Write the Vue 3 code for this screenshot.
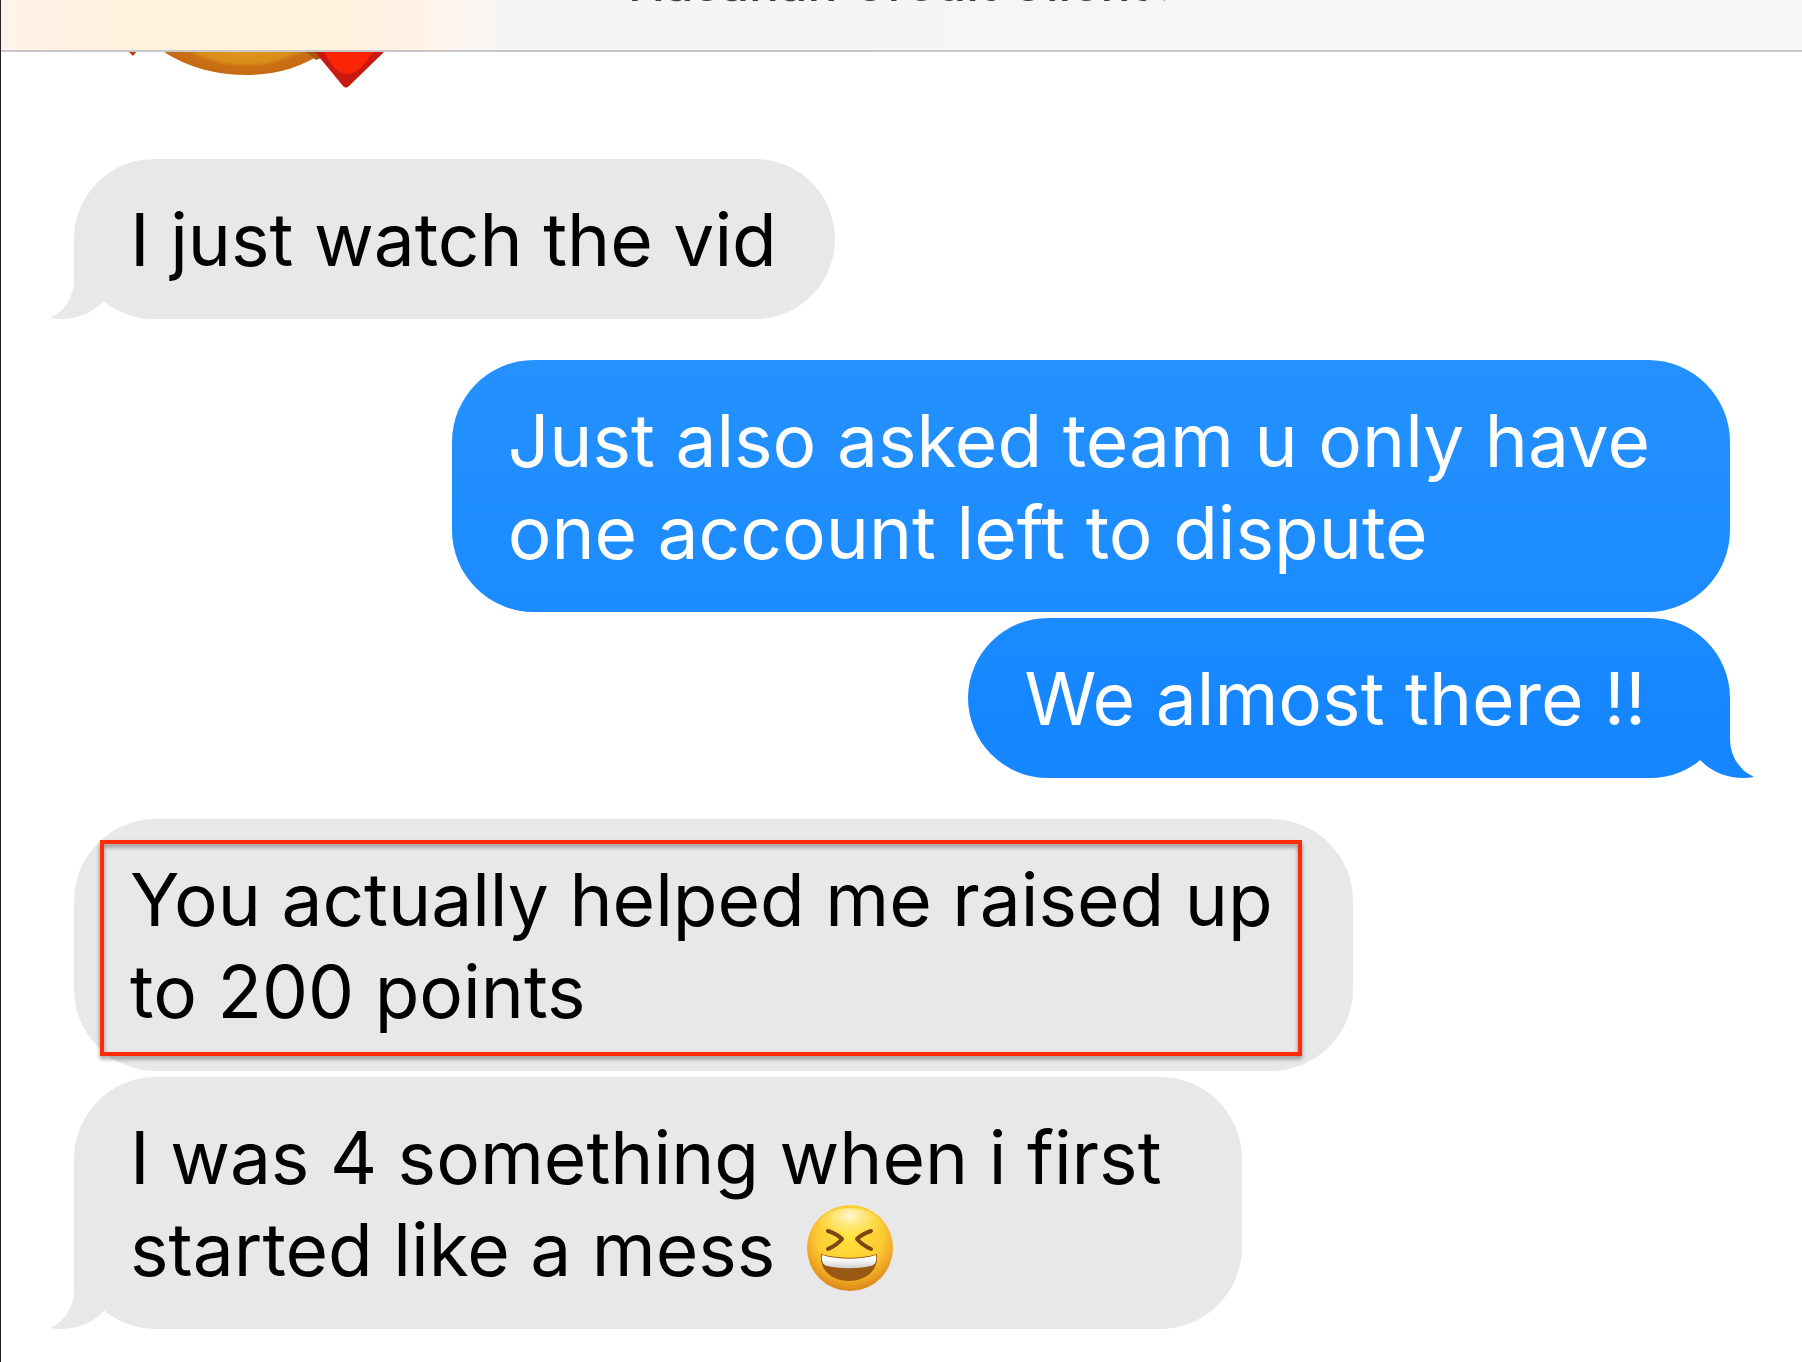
<template>
  <div class="chat">
    <header class="chat-header">
      <h1 class="contact">
        {{ contact }}
        <svg class="chevron" viewBox="0 0 14 28" aria-hidden="true">
          <path d="M2 2L12 14L2 26" />
        </svg>
      </h1>
    </header>

    <main class="thread">
      <!-- earlier emoji message, scrolled under the header -->
      <svg class="love-face" viewBox="0 0 270 38" aria-hidden="true">
        <defs>
          <radialGradient id="faceFill" gradientUnits="userSpaceOnUse" cx="118" cy="-104" r="128">
            <stop offset="0.7" stop-color="#e9a820" />
            <stop offset="0.86" stop-color="#dc8f1b" />
            <stop offset="0.9" stop-color="#d98c1a" />
            <stop offset="0.93" stop-color="#cb7114" />
            <stop offset="1" stop-color="#c46a12" />
          </radialGradient>
        </defs>
        <path d="M0 -1H9L5 4Z" fill="#bd3a12" />
        <path d="M36 0C60 16 90 23 119 23S174 15 196 0Z" fill="url(#faceFill)" />
        <path d="M178 0H196V5L188 8Z" fill="#a8560f" />
        <path d="M187 0L215 34Q218 37 221 34L256 0Z" fill="#c91a12" />
        <path d="M196 0C203 12 209 22 219 22S237 12 245 0Z" fill="#fb2505" />
      </svg>

      <section
        v-for="(group, g) in groups"
        :key="g"
        class="group"
        :class="group.from"
      >
        <div
          v-for="(message, m) in group.messages"
          :key="m"
          class="bubble"
          :class="[message.tone, { wrapped: message.lines.length > 1 }]"
        >
          <p class="text">
            <template v-for="(line, l) in message.lines" :key="l"><br v-if="l > 0" />{{ line }}</template>
            <svg v-if="message.emoji" class="emoji" viewBox="0 0 88 88" role="img" aria-label="😆">
              <defs>
                <radialGradient id="laughFill" cx="0.5" cy="0.36" r="0.64">
                  <stop offset="0" stop-color="#ffe23c" />
                  <stop offset="0.6" stop-color="#fccb33" />
                  <stop offset="0.82" stop-color="#f0a624" />
                  <stop offset="1" stop-color="#d9851a" />
                </radialGradient>
                <radialGradient id="laughShine" cx="0.5" cy="0.2" r="0.6">
                  <stop offset="0" stop-color="#fff6d8" />
                  <stop offset="1" stop-color="#ffee58" stop-opacity="0" />
                </radialGradient>
                <linearGradient id="teeth" x1="0" y1="0" x2="0" y2="1">
                  <stop offset="0.3" stop-color="#ffffff" />
                  <stop offset="1" stop-color="#cfcfcf" />
                </linearGradient>
              </defs>
              <circle cx="44" cy="44" r="43" fill="url(#laughFill)" />
              <ellipse cx="44" cy="24" rx="32" ry="20" fill="url(#laughShine)" />
              <path d="M22 27Q31 30 36 35Q31 41 22 45M65 27Q56 30 51 35Q56 41 65 45" fill="none" stroke="#7d4510" stroke-width="4" stroke-linecap="round" stroke-linejoin="round" />
              <path d="M15 50C33 55 54 55 71 50C73 66 60 77 43 77S13 66 15 50Z" fill="#9a5912" />
              <path d="M16 51C33 56 54 56 70 51C71 58 69 61 65 62C50 65 35 65 21 62C17 61 15 57 16 51Z" fill="url(#teeth)" />
            </svg>
          </p>
          <svg v-if="m === group.messages.length - 1" class="tail" viewBox="0 0 60 90" aria-hidden="true">
            <path d="M24 8V50C24 68 15 82 0 89C19 92 38 88 54 72Z" />
          </svg>
          <span v-if="message.marked" class="marker"></span>
        </div>
      </section>
    </main>
  </div>
</template>

<script setup>
const contact = 'Hasanah Credit Client'

/**
 * 消息分组，每组最后一条带尾巴
 */
const groups = [
  {
    from: 'received',
    messages: [{ lines: ['I just watch the vid'] }]
  },
  {
    from: 'sent',
    messages: [
      { lines: ['Just also asked team u only have', 'one account left to dispute'], tone: 'light' },
      { lines: ['We almost there !!'], tone: 'deep' }
    ]
  },
  {
    from: 'received',
    messages: [
      { lines: ['You actually helped me raised up', 'to 200 points'], marked: true },
      { lines: ['I was 4 something when i first', 'started like a mess '], emoji: true }
    ]
  }
]
</script>

<style>
body {
  margin: 0;
  background: #fff;
}
</style>

<style scoped>
.chat {
  box-sizing: border-box;
  min-height: 100vh;
  border-left: 1px solid #222226;
  background: #fff;
  font-family: Inter, "Liberation Sans", sans-serif;
  overflow: hidden;
}

.chat-header {
  display: flex;
  justify-content: center;
  align-items: flex-start;
  height: 50px;
  border-bottom: 2px solid #c7c7ca;
  background: linear-gradient(90deg, #fff3ec 0, #fff1e2 72px, #fff1da 150px, #fff1da 290px, #fff3dc 325px, #fff1e2 370px, #fff3ea 430px, #f8f5f2 485px, #f5f5f5 540px, #f6f6f6 100%);
  overflow: hidden;
}

.contact {
  margin: -41px 0 0;
  font-size: 50px;
  font-weight: 500;
  line-height: 48px;
  color: #3c3c3e;
}

.chevron {
  width: 14px;
  height: 28px;
  vertical-align: -1px;
  fill: none;
  stroke: #a0a0a4;
  stroke-width: 4;
}

.thread {
  display: flex;
  flex-direction: column;
  gap: 41px;
  padding: 0 72px 33px 73px;
}

.love-face {
  width: 270px;
  height: 38px;
  margin: 0 0 28px 54px;
}

.group {
  display: flex;
  flex-direction: column;
  align-items: flex-start;
  gap: 6px;
}

.sent {
  align-items: flex-end;
}

.bubble {
  position: relative;
  box-sizing: border-box;
  padding: 35px 58px 33px 56px;
  border-radius: 82px;
  background: #e8e8ea;
  color: #000;
}

.sent .bubble {
  padding-right: 84px;
  color: #fff;
}

.bubble.wrapped {
  padding-right: 80px;
}

.sent .bubble.wrapped {
  padding-right: 80px;
}

.bubble.light {
  background: linear-gradient(#2491ff, #1b8bff);
}

.bubble.deep {
  background: linear-gradient(#1b8bff, #1686ff 60%, #1686ff);
}

.text {
  margin: 0;
  font-size: 73px;
  line-height: 92px;
  white-space: nowrap;
}

.emoji {
  width: 88px;
  height: 88px;
  vertical-align: 0;
  margin: -16px 0 -16px 10px;
}

.tail {
  position: absolute;
  bottom: 0;
  left: -24px;
  width: 60px;
  height: 90px;
  fill: #e8e8ea;
}

.sent .tail {
  left: auto;
  right: -24px;
  transform: scaleX(-1);
  fill: #1686ff;
}

/* red annotation frame over the message */
.marker {
  position: absolute;
  inset: 21px 51px 15px 26px;
  border: 4px solid #ff2a08;
  filter: drop-shadow(0 3px 2px rgba(0, 0, 0, 0.4));
}
</style>
